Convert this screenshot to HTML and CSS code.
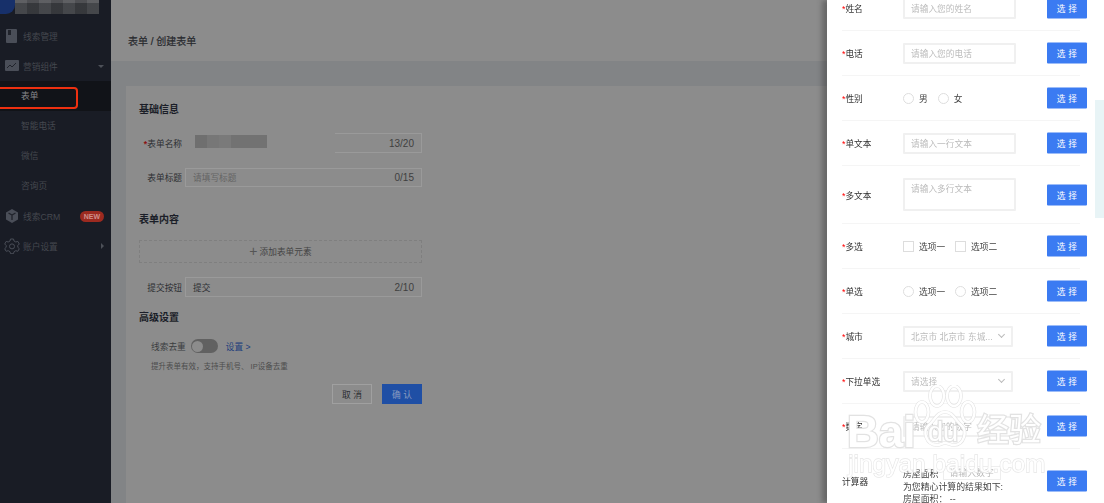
FILE: index.html
```html
<!DOCTYPE html>
<html lang="zh">
<head>
<meta charset="utf-8">
<title>创建表单</title>
<link rel="stylesheet" href="styles.css">
</head>
<body>
<div class="app">
  <aside class="sidebar">
    <div class="brand"><span class="brand-logo"></span><span class="brand-mosaic"></span></div>
    <nav class="nav">
      <div class="nav-item">
        <svg class="nav-icon" viewBox="0 0 14 14"><rect x="1" y="0" width="11" height="14" rx="1" fill="#4a4e58"/><rect x="3" y="1" width="3" height="5" fill="#20232b"/></svg>
        <span>线索管理</span>
      </div>
      <div class="nav-item">
        <svg class="nav-icon" viewBox="0 0 14 14"><rect x="0" y="1" width="14" height="11" rx="1" fill="#4a4e58"/><path d="M2 9l3-3 2 2 4-4" fill="none" stroke="#20232b" stroke-width="1"/></svg>
        <span>营销组件</span><i class="caret-down"></i>
      </div>
      <div class="sub-item active">表单</div>
      <div class="sub-item">智能电话</div>
      <div class="sub-item">微信</div>
      <div class="sub-item">咨询页</div>
      <div class="nav-item">
        <svg class="nav-icon" viewBox="0 0 14 14"><path d="M7 0l6 3.400v7.200L7 14l-6-3.400V3.400z" fill="#4a4e58"/><path d="M3.500 4L7 6l3.500-2M7 6v5" fill="none" stroke="#20232b" stroke-width="1.300"/></svg>
        <span>线索CRM</span><em class="new">NEW</em>
      </div>
      <div class="nav-item">
        <svg class="nav-icon gear" viewBox="0 0 16 16"><path d="M6.500 1h3l.5 2 1.800 1 2-.6 1.500 2.600-1.500 1.500v1.800l1.500 1.400-1.500 2.600-2-.6-1.800 1-.5 2h-3l-.5-2-1.800-1-2 .6L.7 10.700l1.500-1.400V7.500L.7 6l1.500-2.600 2 .6L6 3z" fill="none" stroke="#4a4e58" stroke-width="1"/><circle cx="8" cy="8.400" r="2.500" fill="none" stroke="#4a4e58" stroke-width="1"/></svg>
        <span>账户设置</span><i class="caret-right"></i>
      </div>
    </nav>
    <div class="red-mark"></div>
  </aside>

  <main class="main">
    <header class="topbar">表单 / 创建表单</header>
    <section class="card">
      <h3 class="section-title">基础信息</h3>
      <div class="form-row name-row">
        <label class="form-label"><b>*</b>表单名称</label>
        <div class="field"><span class="smear"></span><span class="mosaic"></span><span class="count">13/20</span></div>
      </div>
      <div class="form-row title-row">
        <label class="form-label">表单标题</label>
        <div class="field"><span class="ph">请填写标题</span><span class="count">0/15</span></div>
      </div>
      <h3 class="section-title content-title">表单内容</h3>
      <div class="add-box"><span class="plus">+</span>添加表单元素</div>
      <div class="form-row submit-row">
        <label class="form-label">提交按钮</label>
        <div class="field"><span class="val">提交</span><span class="count">2/10</span></div>
      </div>
      <h3 class="section-title adv-title">高级设置</h3>
      <div class="dedupe">
        <span>线索去重</span><span class="toggle"><i></i></span><a class="link">设置 &gt;</a>
      </div>
      <p class="hint">提升表单有效，支持手机号、 IP设备去重</p>
      <div class="actions"><button class="btn-cancel">取 消</button><button class="btn-ok">确 认</button></div>
    </section>
  </main>

  <aside class="drawer">
    <div class="row r-first"><label><b>*</b>姓名</label><div class="ctl"><div class="input">请输入您的姓名</div></div><button class="pick">选 择</button></div>
    <div class="row"><label><b>*</b>电话</label><div class="ctl"><div class="input">请输入您的电话</div></div><button class="pick">选 择</button></div>
    <div class="row"><label><b>*</b>性别</label><div class="ctl opts"><i class="radio"></i><span>男</span><i class="radio"></i><span>女</span></div><button class="pick">选 择</button></div>
    <div class="row"><label><b>*</b>单文本</label><div class="ctl"><div class="input">请输入一行文本</div></div><button class="pick">选 择</button></div>
    <div class="row r-tall"><label><b>*</b>多文本</label><div class="ctl"><div class="input area">请输入多行文本</div></div><button class="pick">选 择</button></div>
    <div class="row"><label><b>*</b>多选</label><div class="ctl opts"><i class="check"></i><span>选项一</span><i class="check"></i><span>选项二</span></div><button class="pick">选 择</button></div>
    <div class="row"><label><b>*</b>单选</label><div class="ctl opts"><i class="radio"></i><span>选项一</span><i class="radio"></i><span>选项二</span></div><button class="pick">选 择</button></div>
    <div class="row"><label><b>*</b>城市</label><div class="ctl"><div class="input select">北京市 北京市 东城...<i class="chev"></i></div></div><button class="pick">选 择</button></div>
    <div class="row"><label><b>*</b>下拉单选</label><div class="ctl"><div class="input select">请选择<i class="chev"></i></div></div><button class="pick">选 择</button></div>
    <div class="row"><label><b>*</b>数字</label><div class="ctl"><div class="input">请输入您的数字</div></div><button class="pick">选 择</button></div>
    <div class="row r-calc"><label>计算器</label><div class="ctl calc"><div class="calc-top"><span>房屋面积</span><span class="calc-input">请输入数字</span></div><div class="calc-line">为您精心计算的结果如下:</div><div class="calc-last">房屋面积： --</div></div><button class="pick">选 择</button></div>
    <div class="tint"></div>
  </aside>

  <div class="watermark">
    <span class="wm-logo">Bai</span>
    <svg class="wm-paw" viewBox="0 0 64 63">
      <g fill="none" stroke="#e2e2e2" stroke-width="3.600">
        <ellipse cx="9" cy="27" rx="6.500" ry="10"/><ellipse cx="24" cy="11" rx="7" ry="10"/><ellipse cx="41" cy="11" rx="7" ry="10"/><ellipse cx="55" cy="27" rx="6.500" ry="10"/>
        <path d="M32 27c-8 0-10 8-16 13-7 6-3 20 8 20 4 0 5-2 8-2s5 2 9 2c10 0 14-14 7-20-6-5-8-13-16-13z"/>
      </g>
      <g fill="none" stroke="#fff" stroke-width="2.400">
        <ellipse cx="9" cy="27" rx="6.500" ry="10"/><ellipse cx="24" cy="11" rx="7" ry="10"/><ellipse cx="41" cy="11" rx="7" ry="10"/><ellipse cx="55" cy="27" rx="6.500" ry="10"/>
        <path d="M32 27c-8 0-10 8-16 13-7 6-3 20 8 20 4 0 5-2 8-2s5 2 9 2c10 0 14-14 7-20-6-5-8-13-16-13z"/>
      </g>
    </svg>
    <span class="wm-du">du</span>
    <span class="wm-cn">经验</span>
    <span class="wm-url">jingyan.baidu.com</span>
  </div>
</div>
</body>
</html>
```
FILE: styles.css
```css
* { box-sizing: border-box; }
html, body { margin: 0; height: 100%; overflow: hidden; }
body { font-family: "Liberation Sans", "Noto Sans CJK SC", sans-serif; font-size: 8.7px; color: #2d2f33; }
.app { position: relative; display: flex; width: 1104px; height: 503px; overflow: hidden; filter: blur(0.5px); }

.sidebar { position: relative; flex: 0 0 111px; background: #191c25; color: #45484f; }
.brand { display: flex; height: 14px; }
.brand-logo { width: 15px; height: 14px; background: #17306a; border-radius: 0 0 9px 0; }
.brand-mosaic { width: 84px; height: 14px; background: repeating-linear-gradient(90deg, rgba(255,255,255,.05) 0 12px, rgba(0,0,0,.08) 12px 24px), linear-gradient(#56575b 0 3px, #3b3d41 3px 14px); }
.nav { display: flex; flex-direction: column; padding-top: 7px; }
.nav-item { display: flex; align-items: center; height: 30px; padding-left: 5px; gap: 4px; flex: none; }
.nav-icon { width: 14px; height: 14px; flex: none; }
.gear { width: 16px; height: 16px; margin: 0 -1px 0 -1px; }
.caret-down { margin-left: auto; margin-right: 7px; border: 3px solid transparent; border-top-color: #4d5058; border-bottom: 0; }
.caret-right { margin-left: auto; margin-right: 7px; border: 3px solid transparent; border-left-color: #4d5058; border-right: 0; }
.new { margin-left: auto; margin-right: 7px; padding: 0 4px; height: 11px; line-height: 11px; border-radius: 6px; background: #9c2a20; color: #cf8f8a; font-size: 7px; font-style: normal; font-weight: 700; }
.sub-item { height: 30px; line-height: 30px; padding-left: 21px; flex: none; }
.sub-item.active { background: #111318; color: #85868a; }
.red-mark { position: absolute; left: -6px; top: 87px; width: 84px; height: 22px; border: 2px solid #ee3010; border-radius: 4px; }

.main { flex: 1; display: flex; flex-direction: column; background: #828486; min-width: 0; }
.topbar { height: 61px; flex: none; padding: 35px 0 0 17px; line-height: 14px; background: #8c8c8c; font-size: 10px; color: #26282c; -webkit-text-stroke: 0.2px #26282c; }
.card { flex: 1; margin: 25px 0 0 15px; padding: 16px 0 0 13px; background: #8c8c8c; }
.section-title { margin: 0; font-size: 10px; line-height: 16px; font-weight: 700; color: #1b1e28; }
.form-row { position: relative; display: flex; align-items: center; width: 283px; height: 20px; }
.form-label { flex: 0 0 46px; text-align: right; padding-right: 3px; color: #2d2f33; white-space: nowrap; }
.form-label b { color: #8c1212; }
.field { position: relative; flex: 1; height: 100%; display: flex; align-items: center; padding: 0 7px; border: 1px solid #9a9a9a; }
.name-row { margin-top: 15px; }
.title-row { margin-top: 15px; height: 19px; }
.count { margin-left: auto; font-size: 10px; color: #3f3f3f; }
.ph { color: #646464; }
.val { color: #2d2f33; }
.smear { position: absolute; left: -4px; top: -3px; width: 153px; height: 25px; background: #8c8c8c; }
.mosaic { position: absolute; left: 9px; top: 1px; width: 72px; height: 13px; background: linear-gradient(90deg, #6f6f6f 0 17%, #777 17% 33%, #7a7a7a 33% 50%, #727272 50% 100%); }
.content-title { margin-top: 25px; }
.add-box { width: 283px; height: 23px; margin-top: 12px; border: 1px dashed #7f7f7f; text-align: center; line-height: 21px; color: #444; }
.plus { font-size: 14px; margin-right: 2px; vertical-align: -1px; color: #555; }
.submit-row { margin-top: 14px; }
.adv-title { margin-top: 13px; }
.dedupe { display: flex; align-items: center; gap: 5px; margin: 13px 0 0 12px; height: 14px; color: #3a3c40; }
.toggle { display: flex; align-items: center; width: 27px; height: 14px; padding-left: 1px; background: #616161; border-radius: 7px; }
.toggle i { width: 11px; height: 11px; border-radius: 50%; background: #8c8c8c; }
.link { color: #1e3f7c; margin-left: 3px; }
.hint { margin: 8px 0 0 12px; font-size: 7.5px; line-height: 11px; color: #4c4c4c; }
.actions { display: flex; justify-content: flex-end; gap: 10px; width: 283px; margin-top: 12px; }
.actions button { width: 40px; height: 20px; font: inherit; padding: 0; }
.btn-cancel { background: #8c8c8c; border: 1px solid #a0a0a0; color: #2d2f33; }
.btn-ok { background: #1f4fa5; border: 1px solid #1f4fa5; color: #8a9cc0; }

.drawer { position: relative; flex: 0 0 277px; display: flex; flex-direction: column; padding-left: 15px; background: #fff; box-shadow: -5px 0 5px rgba(60,60,60,.45); }
.row { position: relative; display: flex; align-items: center; width: 238px; height: 45px; flex: none; border-bottom: 1px solid #f5f5f5; }
.r-first { margin-top: -14px; }
.r-tall { height: 58px; }
.r-calc { height: 64px; border: 0; }
.row label { flex: 0 0 61px; padding-top: 1px; color: #333; white-space: nowrap; }
.row label b { color: #f00; font-weight: 400; }
.ctl { flex: 0 0 113px; color: #444; }
.input { height: 21px; line-height: 18px; padding-left: 6px; border: 2px solid #f0f0f0; border-radius: 1px; color: #bbb; white-space: nowrap; }
.area { height: 33px; line-height: 16px; padding-top: 1px; }
.select { position: relative; width: 110px; }
.chev { position: absolute; right: 7px; top: 4px; width: 5px; height: 5px; border: solid #bbb; border-width: 0 1px 1px 0; transform: rotate(45deg); }
.opts { display: flex; align-items: center; }
.radio { width: 11px; height: 11px; border: 1px solid #ddd; border-radius: 50%; margin-right: 5px; flex: none; }
.check { width: 11px; height: 11px; border: 1px solid #ddd; margin-right: 5px; flex: none; }
.opts span { margin-right: 10px; white-space: nowrap; }
.calc { align-self: flex-start; padding-top: 16px; color: #444; font-size: 8.9px; }
.calc-top { display: flex; gap: 4px; height: 16px; align-items: center; white-space: nowrap; }
.calc-line { height: 13px; line-height: 13px; white-space: nowrap; }
.calc-last { height: 11px; line-height: 11px; white-space: nowrap; }
.calc-input { padding: 0 6px; height: 14px; line-height: 12px; border: 1px solid #eee; color: #bbb; }
.pick { position: absolute; left: 205px; top: 50%; transform: translateY(-50%); width: 40px; height: 21px; padding: 0; border: 0; border-radius: 1px; background: #3b7bf2; color: #fff; font: inherit; letter-spacing: .2px; }
.tint { position: absolute; right: 0; top: 100px; width: 9px; height: 118px; background: #e8f4f6; }

.watermark { position: absolute; left: 846px; top: 385px; width: 200px; height: 92px; pointer-events: none; }
.wm-logo, .wm-du, .wm-cn, .wm-url { position: absolute; white-space: nowrap; color: #fff; paint-order: stroke fill; -webkit-text-stroke: 2.4px #e2e2e2; }
.wm-logo { left: 1px; top: 25px; font-size: 44px; line-height: 44px; font-weight: 700; }
.wm-paw { position: absolute; left: 67px; top: 0; width: 64px; height: 63px; }
.wm-du { left: 82px; top: 34px; font-size: 27px; line-height: 27px; }
.wm-cn { left: 131px; top: 27px; font-size: 32px; line-height: 36px; }
.wm-url { left: 2px; top: 67px; font-size: 24.5px; line-height: 24px; -webkit-text-stroke: 1.3px #e6e6e6; }
```
